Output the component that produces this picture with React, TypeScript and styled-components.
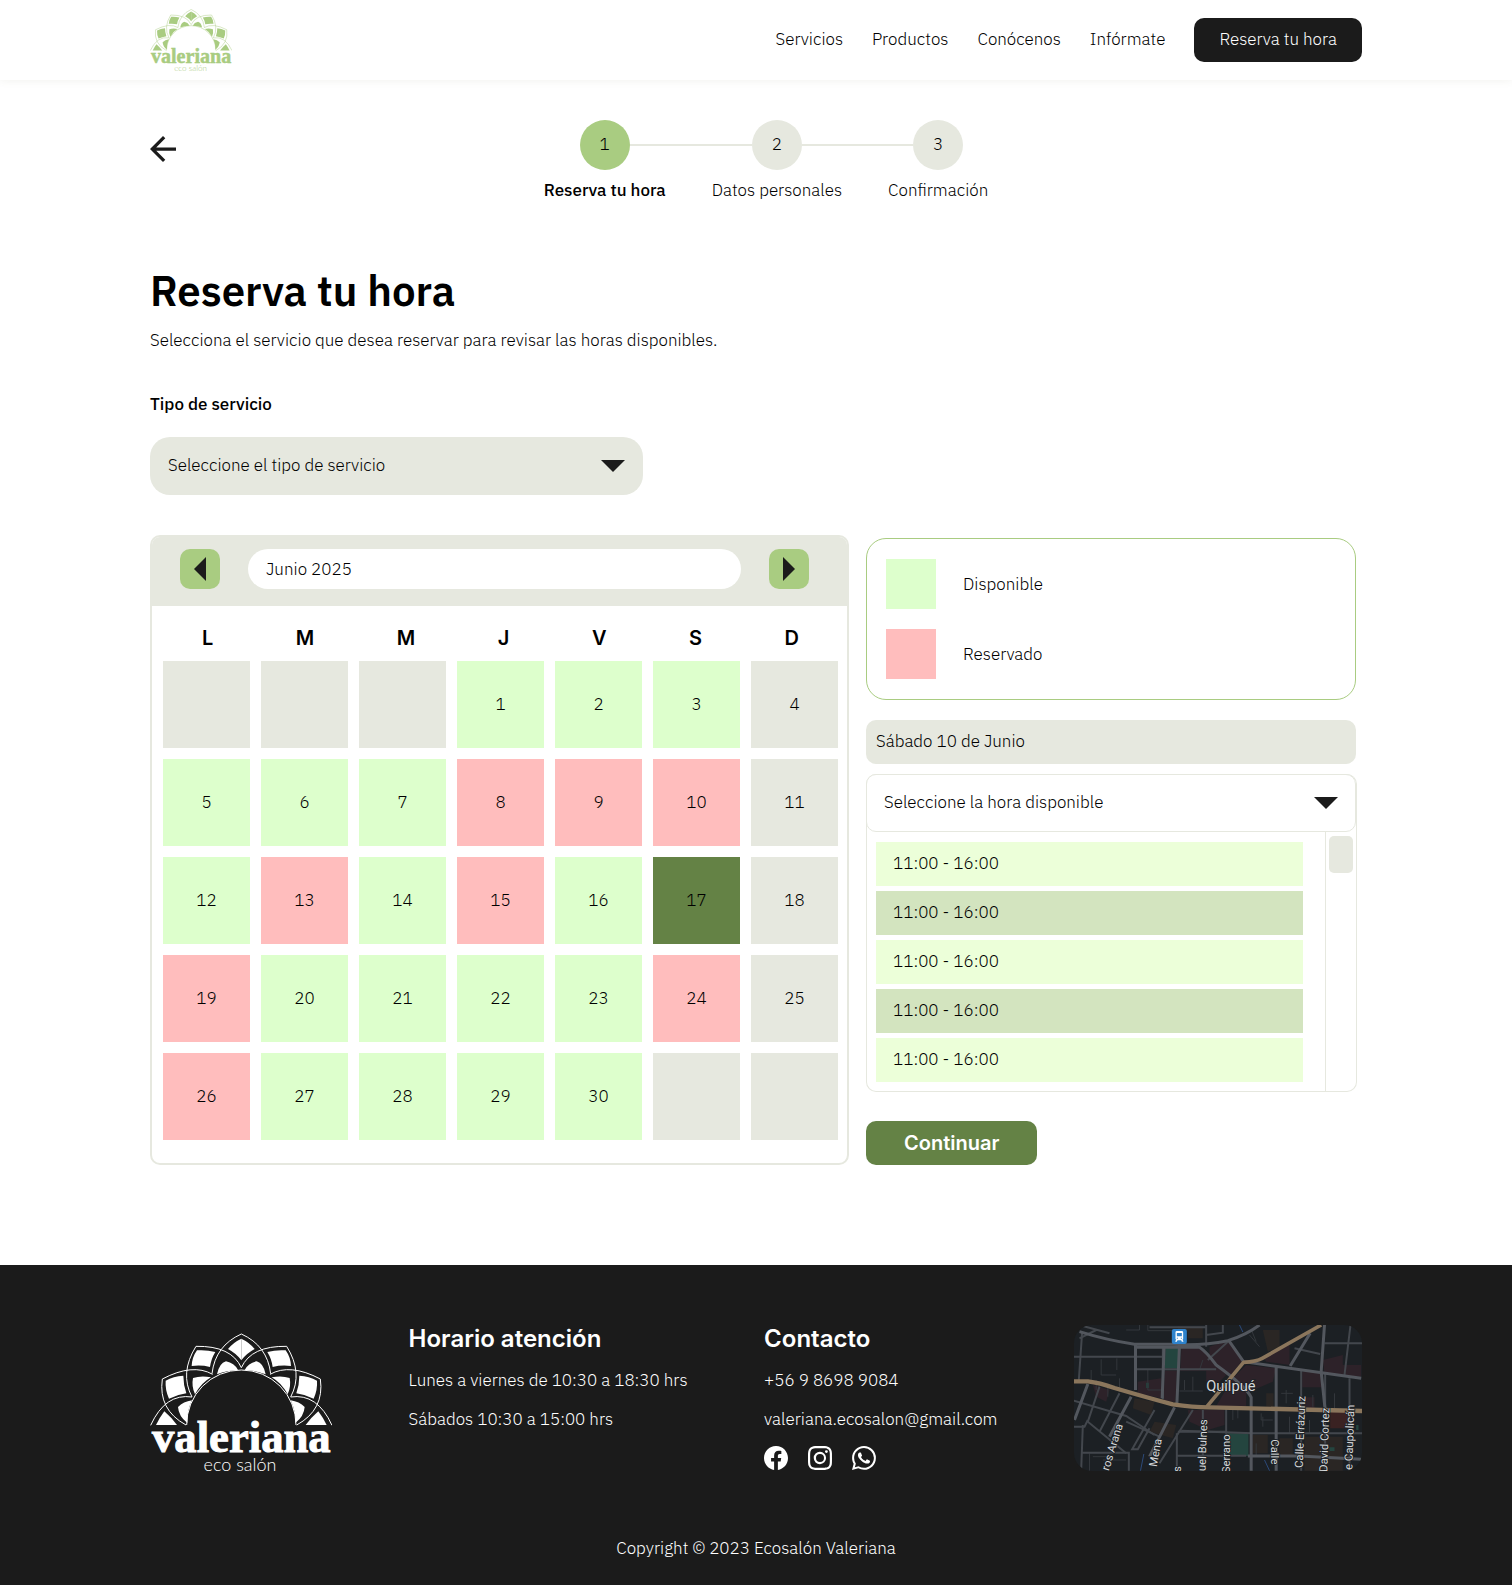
import React, { useState } from "react";
import styled, { createGlobalStyle } from "styled-components";
import { BsFacebook, BsInstagram, BsWhatsapp } from "react-icons/bs";

const color = {
  ink: "#1b1b1b",
  stone: "#e6e8df",
  leaf: "#a9cc81",
  moss: "#648245",
  free: "#ddffcc",
  taken: "#ffbdbd",
  slotLight: "#ecffd9",
  slotDark: "#d3e4bf",
};

const bodyFont = `"IBM Plex Sans", "Noto Sans", sans-serif`;
const headingFont = `Inter, "Noto Sans", sans-serif`;

const GlobalStyle = createGlobalStyle`
  *, *::before, *::after { box-sizing: border-box; }
  body {
    margin: 0;
    background: #fff;
    color: #000;
    font-family: ${bodyFont};
    font-size: 17px;
    font-weight: 300;
    line-height: 24px;
  }
  h1, h2, p, ul, ol { margin: 0; padding: 0; }
  ul, ol { list-style: none; }
  button, select, input { font: inherit; color: inherit; }
  button { border: 0; padding: 0; cursor: pointer; }
  a { color: inherit; text-decoration: none; }
  svg { display: block; }
`;

const Container = styled.div`
  width: min(100% - 48px, 1212px);
  margin: 0 auto;
`;

/* ---------- Top bar ---------- */

const TopBar = styled.header`
  background: #fff;
  box-shadow: 0 1px 8px rgba(100, 100, 60, 0.08);
`;

const TopBarInner = styled(Container)`
  display: flex;
  align-items: center;
  justify-content: space-between;
  min-height: 80px;
`;

const HomeLink = styled.a`
  padding-top: 4px;
`;

const Nav = styled.nav`
  display: flex;
  align-items: center;
  gap: 29px;

  a {
    padding: 9px 0 11px;
  }
`;

const BookLink = styled.a`
  && {
    padding: 9px 25px 11px;
  }
  border-radius: 10px;
  background: ${color.ink};
  color: #fff;
`;

/* ---------- Steps ---------- */

const Main = styled.main`
  padding: 40px 0 100px;
`;

const Content = styled(Container)`
  padding-right: 6px;
`;

const StepsRow = styled.div`
  display: flex;
  align-items: flex-start;
`;

const BackLink = styled.a`
  margin-top: 16px;
`;

const Steps = styled.ol`
  flex: 1;
  display: flex;
  justify-content: center;
`;

const Step = styled.li<{ $active?: boolean }>`
  display: flex;
  flex-direction: column;
  gap: 8px;
  font-weight: ${(p) => (p.$active ? 500 : 300)};
`;

const StepTrack = styled.div`
  display: flex;
  align-items: center;
`;

const StepLine = styled.span<{ $hidden: boolean }>`
  flex: 1;
  height: 2px;
  background: ${(p) => (p.$hidden ? "transparent" : color.stone)};
`;

const StepDot = styled.span<{ $active?: boolean }>`
  display: grid;
  place-items: center;
  width: 50px;
  height: 50px;
  padding-bottom: 2px;
  border-radius: 50%;
  font-weight: 300;
  background: ${(p) => (p.$active ? color.leaf : color.stone)};
`;

const StepLabel = styled.span`
  padding: 0 23px;
  text-align: center;
`;

/* ---------- Intro ---------- */

const Title = styled.h1`
  margin-top: 63px;
  font-size: 42px;
  line-height: 52px;
  font-weight: 600;
`;

const Lead = styled.p`
  margin-top: 11px;
`;

const FieldLabel = styled.label`
  display: block;
  margin: 40px 0 21px;
  font-weight: 500;
`;

const SelectShell = styled.div<{ $outlined?: boolean }>`
  display: grid;
  grid-template-columns: 1fr 24px 18px;
  align-items: center;
  max-width: ${(p) => (p.$outlined ? "none" : "493px")};
  margin-right: ${(p) => (p.$outlined ? "1px" : "0")};

  select {
    grid-column: 1 / -1;
    grid-row: 1;
    width: 100%;
    height: 58px;
    padding: 0 48px 2px ${(p) => (p.$outlined ? 17 : 18)}px;
    appearance: none;
    border: ${(p) => (p.$outlined ? `1px solid ${color.stone}` : "0")};
    border-radius: ${(p) => (p.$outlined ? 10 : 20)}px;
    background: ${(p) => (p.$outlined ? "#fff" : color.stone)};
  }

  svg {
    grid-column: 2;
    grid-row: 1;
    pointer-events: none;
  }
`;

/* ---------- Booking area ---------- */

const Booking = styled.div`
  display: grid;
  grid-template-columns: minmax(0, 699fr) minmax(0, 490fr);
  gap: 17px;
  align-items: start;
  margin-top: 40px;
`;

const Calendar = styled.section`
  border: 2px solid ${color.stone};
  border-radius: 10px;
  overflow: hidden;
`;

const CalendarHead = styled.div`
  display: flex;
  align-items: center;
  gap: 28px;
  padding: 12px 38px 17px 28px;
  background: ${color.stone};
`;

const MonthButton = styled.button`
  display: grid;
  place-items: center;
  width: 40px;
  height: 40px;
  border-radius: 10px;
  background: ${color.leaf};
`;

const MonthField = styled.input`
  flex: 1;
  min-width: 0;
  height: 40px;
  padding: 0 18px;
  border: 0;
  border-radius: 20px;
  background: #fff;
`;

const WeekRow = styled.div`
  display: flex;
  justify-content: space-between;
  padding: 20px 48px 11px 50px;
`;

const DayGrid = styled.div`
  display: grid;
  grid-template-columns: repeat(7, minmax(0, 1fr));
  gap: 11px;
  padding: 0 9px 23px 11px;
`;

const Weekday = styled.span`
  font-family: ${headingFont};
  font-size: 20px;
  font-weight: 600;
`;

type DayKind = "off" | "free" | "taken" | "picked";

const dayColor: Record<DayKind, string> = {
  off: color.stone,
  free: color.free,
  taken: color.taken,
  picked: color.moss,
};

const Day = styled.button<{ $kind: DayKind }>`
  aspect-ratio: 1;
  padding-bottom: 2px;
  background: ${(p) => dayColor[p.$kind]};
  color: #000;
`;

const Blank = styled.span`
  aspect-ratio: 1;
  background: ${color.stone};
`;

/* ---------- Side column ---------- */

const Side = styled.aside`
  display: flex;
  flex-direction: column;
  padding-top: 3px;
`;

const Legend = styled.ul`
  display: grid;
  gap: 20px;
  padding: 20px 19px;
  border: 1px solid ${color.leaf};
  border-radius: 20px;
`;

const LegendItem = styled.li`
  display: flex;
  align-items: center;
  gap: 27px;
`;

const Swatch = styled.span<{ $kind: DayKind }>`
  width: 50px;
  height: 50px;
  background: ${(p) => dayColor[p.$kind]};
`;

const PickedDate = styled.p`
  margin: 20px 0 10px;
  padding: 9px 10px 11px;
  border-radius: 10px;
  background: ${color.stone};
`;

const TimePicker = styled.div`
  margin-right: -1px;
  border-radius: 10px;
  box-shadow: inset 0 0 0 1px ${color.stone};
`;

const SlotArea = styled.div`
  display: grid;
  grid-template-columns: 1fr 32px;
`;

const SlotList = styled.ul`
  display: grid;
  gap: 5px;
  padding: 10px 22px 10px 10px;
`;

const Slot = styled.button`
  width: 100%;
  height: 44px;
  padding: 0 17px 2px;
  text-align: left;
  background: ${color.slotLight};

  li:nth-child(even) > & {
    background: ${color.slotDark};
  }
`;

const ScrollTrack = styled.div`
  padding: 4px 4px 4px 3px;
  border-left: 1px solid ${color.stone};
`;

const ScrollThumb = styled.div`
  height: 37px;
  border-radius: 5px;
  background: ${color.stone};
`;

const ContinueButton = styled.button`
  align-self: flex-start;
  margin-top: 29px;
  padding: 10px 38px;
  border-radius: 10px;
  background: ${color.moss};
  color: #fff;
  font-family: ${headingFont};
  font-size: 20px;
  font-weight: 600;
`;

/* ---------- Footer ---------- */

const Footer = styled.footer`
  padding: 60px 0 25px;
  background: ${color.ink};
  color: #fff;
`;

const FooterRow = styled(Container)`
  display: flex;
  flex-wrap: wrap;
  justify-content: space-between;
  align-items: flex-start;
`;

const FooterBrand = styled.div`
  padding-top: 8px;
`;

const FooterColumn = styled.section`
  display: flex;
  flex-direction: column;
  gap: 15px;
`;

const FooterTitle = styled.h2`
  font-family: ${headingFont};
  font-size: 24px;
  line-height: 28px;
  font-weight: 600;
`;

const Social = styled.div`
  display: flex;
  gap: 20px;
`;

const MapFrame = styled.div`
  border-radius: 18px;
  overflow: hidden;
`;

const Copyright = styled.p`
  margin-top: 58px;
  text-align: center;
`;

/* ---------- Drawings ---------- */

function HalfFlower() {
  return (
    <>
      <g fill="none" stroke="currentColor" strokeWidth="3">
        <path d="M336 73Q258 108 248 192" />
        <path d="M336 174Q306 108 200 110Q150 190 188 262" />
        <path d="M250 194Q190 160 99 208Q86 300 170 346" />
        <path d="M188 262Q108 250 64 347" />
        <path d="M172 346A164 164 0 0 1 336 181" />
      </g>
      <g fill="currentColor">
        <path d="M336 87Q312 98 296 118Q322 132 336 152Z" />
        <path d="M203 122Q232 120 258 127Q245 148 242 172Q215 165 187 169Q188 143 203 122Z" />
        <path d="M109 213Q132 200 162 198Q162 225 171 251Q143 255 119 267Q107 240 109 213Z" />
        <path d="M105 305Q125 322 143 346H80Q90 325 105 305Z" />
        <path d="M263 194Q270 160 290 155Q315 160 326 181Q293 182 263 194Z" />
        <path d="M191 205Q215 197 245 203Q215 220 197 254Q186 230 191 205Z" />
        <path d="M188 272Q172 305 174 340Q148 320 146 292Q162 276 188 272Z" />
      </g>
    </>
  );
}

function Logo({ width, tint }: { width: number; tint: string }) {
  return (
    <svg width={width} viewBox="62 70 546 436" color={tint} role="img" aria-label="Valeriana eco salón">
      <HalfFlower />
      <g transform="matrix(-1 0 0 1 672 0)">
        <HalfFlower />
      </g>
      <text textAnchor="middle" fill="currentColor">
        <tspan x="336" y="428" stroke="currentColor" strokeWidth="3" fontFamily="'Liberation Serif', serif" fontWeight="700" fontSize="134">
          valeriana
        </tspan>
        <tspan x="332" y="485" fontFamily="Lato, sans-serif" fontWeight="300" fontSize="54">
          eco salón
        </tspan>
      </text>
    </svg>
  );
}

function ArrowBack() {
  return (
    <svg width="26" height="26" viewBox="4 4 16 16" aria-hidden="true">
      <path fill={color.ink} d="M20 11H7.83l5.59-5.59L12 4l-8 8 8 8 1.41-1.41L7.83 13H20z" />
    </svg>
  );
}

function CaretDown() {
  return (
    <svg width="24" height="12" viewBox="0 0 24 12" aria-hidden="true">
      <path fill={color.ink} d="M0 0H24L12 12Z" />
    </svg>
  );
}

function CaretSide({ next }: { next?: boolean }) {
  return (
    <svg width="12" height="24" viewBox="0 0 12 24" aria-hidden="true">
      <path fill={color.ink} d={next ? "M0 0V24L12 12Z" : "M12 0V24L0 12Z"} />
    </svg>
  );
}

const streetNames = [
  { text: "ros Arana", x: 148, y: 484, angle: -73 },
  { text: "Mena", x: 292, y: 472, angle: -80 },
  { text: "s", x: 364, y: 486, angle: -90 },
  { text: "uel Bulnes", x: 438, y: 484, angle: -88 },
  { text: "Serrano", x: 510, y: 490, angle: -90 },
  { text: "Calle", x: 634, y: 388, angle: 90 },
  { text: "Calle Errázuriz", x: 730, y: 474, angle: -88 },
  { text: "David Cortez", x: 803, y: 486, angle: -88 },
  { text: "e Caupolicán", x: 878, y: 480, angle: -88 },
];

function CityMap() {
  return (
    <svg width="288" height="146" viewBox="43 45 865 438" preserveAspectRatio="xMidYMid slice" role="img" aria-label="Mapa de Quilpué">
      <rect x="43" y="45" width="865" height="438" fill="#1c2024" />
      <g fill="#2d2229">
        <path d="M366 110H425L500 195L480 215H440V182H362Z" />
        <path d="M450 110L505 92L550 150L510 200L450 140Z" />
        <path d="M560 165L650 175L640 215L560 250V288H470L520 205Z" />
        <path d="M316 182H352L348 275H312Z" />
        <path d="M235 215L305 205V265L235 250Z" />
        <path d="M610 140L690 100L690 165L620 155Z" />
        <path d="M728 185H790V232H728Z" />
        <path d="M790 150L850 135V165L905 165V200L795 190Z" />
        <path d="M385 300H495V345L445 360L390 335Z" />
        <path d="M100 225L150 240L140 275L110 260Z" />
        <path d="M725 262H765V295H725Z" />
      </g>
      <g fill="#2a2624">
        <path d="M610 60H660V110L625 125Z" />
        <path d="M620 250H642V290H620Z" />
        <path d="M225 265L285 275L275 315L220 295Z" />
        <path d="M285 335L350 345L340 385L270 365Z" />
        <path d="M580 375H625V430H580Z" />
        <path d="M660 385H700V435H660Z" />
        <path d="M355 48H430V85H385V65H355Z" />
        <path d="M735 380H850V482H735Z" />
      </g>
      <path fill="#3a2222" d="M812 305H880L870 355H812Z" />
      <g fill="#24453f">
        <path d="M318 112H356V175H316Z" />
        <path d="M505 370H567V438H505Z" />
        <path d="M260 218H268V234H260Z" />
        <path d="M890 345H897V360H890Z" />
        <path d="M810 412H825V423H810Z" />
      </g>
      <g fill="none" stroke="#2c4a7a" strokeWidth="3">
        <path d="M253 432L243 482" />
        <path d="M615 450L630 482" />
        <path d="M540 45L550 66" />
      </g>
      <g fill="none" stroke="#33373c" strokeWidth="3">
        <path d="M125 148V195H170M172 145V180M265 180V240H305" />
        <path d="M200 60H240V45M265 45V62H340" />
        <path d="M95 215V180M110 240V210M145 260V225M180 245V205" />
        <path d="M375 240V210M360 243H430M400 243V200" />
        <path d="M430 150L420 180M575 58L590 95M600 110L570 75" />
        <path d="M640 330H605V310M520 300V330M535 300V325" />
        <path d="M680 240V280M700 250H665M760 255V290M825 250V295" />
        <path d="M590 400V440M610 320V350M690 320V370M750 330V370" />
        <path d="M100 440H160M90 430V482M130 450H200" />
      </g>
      <g fill="none" stroke="#43474d" strokeWidth="6">
        <path d="M68 65L58 210M43 140H228M230 110H310V268M232 178H470" />
        <path d="M232 140H310M60 85L110 60M70 48L150 70" />
        <path d="M43 272L200 318L285 375M120 230L85 335L200 430M180 250L120 365" />
        <path d="M70 345L65 482M68 428H208V482M200 335L300 380" />
        <path d="M285 300L218 418L235 418L270 355M300 460L400 300" />
        <path d="M355 365H500M355 437H560M352 482V370M430 300V482" />
        <path d="M500 290V482M365 362L580 370H908M505 95L445 150" />
        <path d="M440 45V110M490 45V68L440 75M270 52H440" />
        <path d="M725 180V482M870 205V482M797 190V482" />
        <path d="M873 45L855 195M795 100H908M705 115L782 132" />
        <path d="M43 350H75L85 330" />
      </g>
      <g fill="none" stroke="#53575e" strokeWidth="9">
        <path d="M60 65Q140 90 225 103H340Q430 108 505 92Q560 75 600 45" />
        <path d="M228 103V240M314 110L308 265M360 105L352 285" />
        <path d="M228 112H420Q440 125 470 165Q560 230 575 262V482" />
        <path d="M508 92L552 155L905 205M650 172V482" />
        <path d="M795 45L785 185L797 300M752 70L692 168" />
        <path d="M85 222L45 330M215 260L150 380M345 292L270 440" />
        <path d="M565 438H720L905 448" />
      </g>
      <g fill="none" stroke="#8b765c" strokeLinejoin="round">
        <path strokeWidth="13" d="M43 214H85Q120 218 165 234Q270 265 340 283Q400 292 450 292L908 303" />
        <path strokeWidth="11" d="M442 290Q500 220 552 157Q590 155 608 145L785 45" />
      </g>
      <rect x="337" y="57" width="45" height="45" rx="6" fill="#2f83cc" />
      <path fill="#fff" fillRule="evenodd" d="M352 63H367Q371 63 371 67V88H369L372 95H367L365 91H354L352 95H347L350 88H348V67Q348 63 352 63ZM352 69V79H367V69ZM352 83V86H355V83ZM364 83V86H367V83Z" />
      <g fill="#d5d7d9" stroke="#1c2024" strokeWidth="5" paintOrder="stroke" fontFamily="Roboto, 'Noto Sans', sans-serif" fontWeight="400">
        <text x="514" y="244" fontSize="44" textAnchor="middle">
          Quilpué
        </text>
        {streetNames.map((s) => (
          <text key={s.text} fontSize="34" transform={`translate(${s.x} ${s.y}) rotate(${s.angle})`}>
            {s.text}
          </text>
        ))}
      </g>
    </svg>
  );
}

/* ---------- Page ---------- */

const navLinks = ["Servicios", "Productos", "Conócenos", "Infórmate"];
const steps = ["Reserva tu hora", "Datos personales", "Confirmación"];
const weekdays = ["L", "M", "M", "J", "V", "S", "D"];
const takenDays = [8, 9, 10, 13, 15, 19, 24, 26];
const leadingBlanks = [0, 1, 2];
const trailingBlanks = [0, 1];
const slots = Array.from({ length: 5 }, () => "11:00 - 16:00");

export default function App() {
  const [picked, setPicked] = useState(17);

  const kindOf = (day: number): DayKind => {
    if (day === picked) return "picked";
    if ((day + 3) % 7 === 0) return "off";
    return takenDays.includes(day) ? "taken" : "free";
  };

  return (
    <>
      <GlobalStyle />
      <TopBar>
        <TopBarInner>
          <HomeLink href="#inicio">
            <Logo width={82} tint={color.leaf} />
          </HomeLink>
          <Nav>
            {navLinks.map((name) => (
              <a key={name} href={`#${name}`}>
                {name}
              </a>
            ))}
            <BookLink href="#reserva">Reserva tu hora</BookLink>
          </Nav>
        </TopBarInner>
      </TopBar>

      <Main>
        <Content>
          <StepsRow>
            <BackLink href="#volver" aria-label="Volver">
              <ArrowBack />
            </BackLink>
            <Steps>
              {steps.map((name, i) => (
                <Step key={name} $active={i === 0}>
                  <StepTrack>
                    <StepLine $hidden={i === 0} />
                    <StepDot $active={i === 0}>{i + 1}</StepDot>
                    <StepLine $hidden={i === steps.length - 1} />
                  </StepTrack>
                  <StepLabel>{name}</StepLabel>
                </Step>
              ))}
            </Steps>
          </StepsRow>

          <Title>Reserva tu hora</Title>
          <Lead>Selecciona el servicio que desea reservar para revisar las horas disponibles.</Lead>

          <FieldLabel htmlFor="servicio">Tipo de servicio</FieldLabel>
          <SelectShell>
            <select id="servicio">
              <option>Seleccione el tipo de servicio</option>
            </select>
            <CaretDown />
          </SelectShell>

          <Booking>
            <Calendar aria-label="Calendario">
              <CalendarHead>
                <MonthButton type="button" aria-label="Mes anterior">
                  <CaretSide />
                </MonthButton>
                <MonthField type="text" readOnly value="Junio 2025" aria-label="Mes" />
                <MonthButton type="button" aria-label="Mes siguiente">
                  <CaretSide next />
                </MonthButton>
              </CalendarHead>
              <WeekRow>
                {weekdays.map((d, i) => (
                  <Weekday key={i}>{d}</Weekday>
                ))}
              </WeekRow>
              <DayGrid>
                {leadingBlanks.map((i) => (
                  <Blank key={`lead-${i}`} />
                ))}
                {Array.from({ length: 30 }, (_, i) => i + 1).map((day) => (
                  <Day
                    key={day}
                    type="button"
                    $kind={kindOf(day)}
                    disabled={kindOf(day) === "off" || kindOf(day) === "taken"}
                    onClick={() => setPicked(day)}
                  >
                    {day}
                  </Day>
                ))}
                {trailingBlanks.map((i) => (
                  <Blank key={`trail-${i}`} />
                ))}
              </DayGrid>
            </Calendar>

            <Side>
              <Legend>
                <LegendItem>
                  <Swatch $kind="free" />
                  Disponible
                </LegendItem>
                <LegendItem>
                  <Swatch $kind="taken" />
                  Reservado
                </LegendItem>
              </Legend>
              <PickedDate>Sábado 10 de Junio</PickedDate>
              <TimePicker>
                <SelectShell $outlined>
                  <select aria-label="Hora disponible">
                    <option>Seleccione la hora disponible</option>
                  </select>
                  <CaretDown />
                </SelectShell>
                <SlotArea>
                  <SlotList>
                    {slots.map((slot, i) => (
                      <li key={i}>
                        <Slot type="button">{slot}</Slot>
                      </li>
                    ))}
                  </SlotList>
                  <ScrollTrack>
                    <ScrollThumb />
                  </ScrollTrack>
                </SlotArea>
              </TimePicker>
              <ContinueButton type="button">Continuar</ContinueButton>
            </Side>
          </Booking>
        </Content>
      </Main>

      <Footer>
        <FooterRow>
          <FooterBrand>
            <Logo width={182} tint="#fff" />
          </FooterBrand>
          <FooterColumn>
            <FooterTitle>Horario atención</FooterTitle>
            <p>Lunes a viernes de 10:30 a 18:30 hrs</p>
            <p>Sábados 10:30 a 15:00 hrs</p>
          </FooterColumn>
          <FooterColumn>
            <FooterTitle>Contacto</FooterTitle>
            <a href="tel:+56986989084">+56 9 8698 9084</a>
            <a href="mailto:valeriana.ecosalon@gmail.com">valeriana.ecosalon@gmail.com</a>
            <Social>
              <a href="#facebook" aria-label="Facebook">
                <BsFacebook size={24} />
              </a>
              <a href="#instagram" aria-label="Instagram">
                <BsInstagram size={24} />
              </a>
              <a href="#whatsapp" aria-label="WhatsApp">
                <BsWhatsapp size={24} />
              </a>
            </Social>
          </FooterColumn>
          <MapFrame>
            <CityMap />
          </MapFrame>
        </FooterRow>
        <Copyright>Copyright © 2023 Ecosalón Valeriana</Copyright>
      </Footer>
    </>
  );
}
